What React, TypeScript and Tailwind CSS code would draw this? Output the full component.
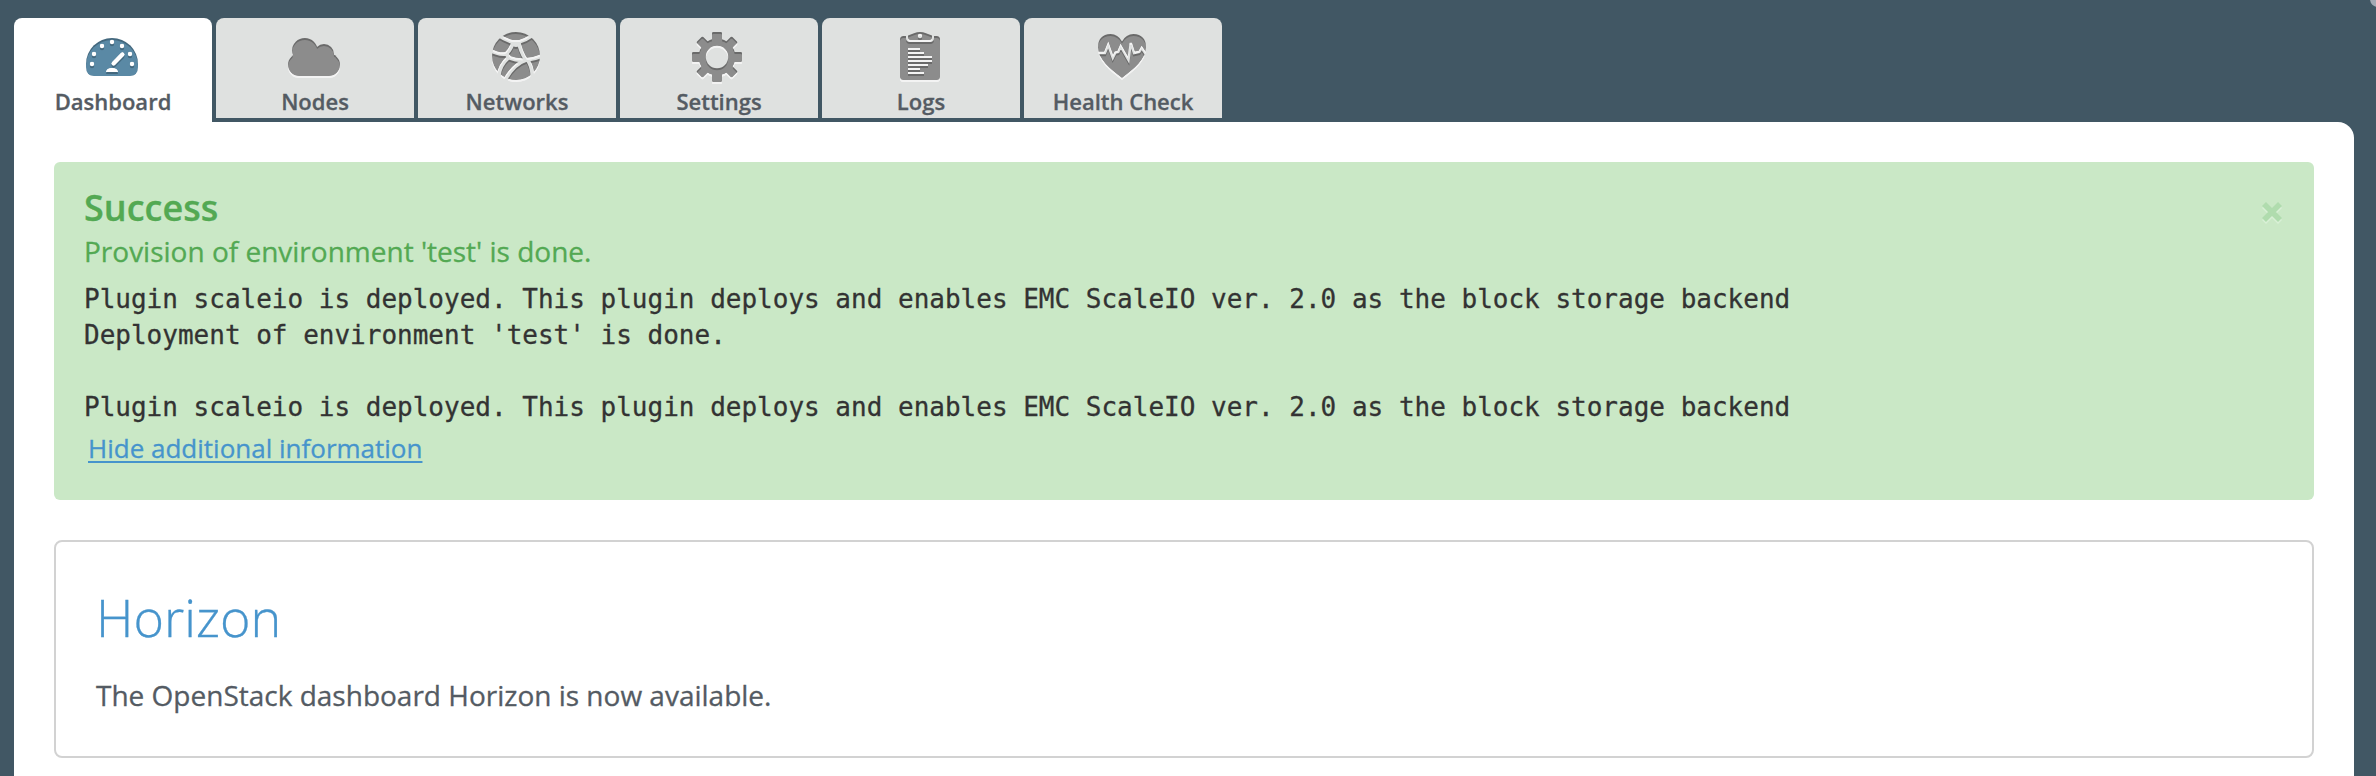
import React, { useId } from "react";

type Tone = { main: string; dark: string; light: string };
const GRAY: Tone = { main: "#8c8c8c", dark: "#6a6a6a", light: "#f3f3f3" };
const BLUE: Tone = { main: "#5a89a5", dark: "#43687e", light: "#ffffff" };

/* Embossed icon: dark inner edge on top, light edge below. White in the mask is solid, black is cut out. */
function Embossed({ tone, children }: { tone: Tone; children: React.ReactNode }) {
  const id = useId().replace(/[^a-zA-Z0-9]/g, "");
  const a = `m${id}a`;
  const b = `m${id}b`;
  return (
    <svg width="60" height="60" viewBox="0 0 60 60" className="relative -left-px block shrink-0">
      <mask id={a} maskUnits="userSpaceOnUse" x="0" y="0" width="60" height="60">
        {children}
      </mask>
      <mask id={b} maskUnits="userSpaceOnUse" x="0" y="0" width="60" height="60">
        <g transform="translate(0 2)">{children}</g>
      </mask>
      <rect width="60" height="60" fill={tone.light} mask={`url(#${b})`} />
      <rect width="60" height="60" fill={tone.dark} mask={`url(#${a})`} />
      <g mask={`url(#${a})`}>
        <rect width="60" height="60" fill={tone.main} mask={`url(#${b})`} />
      </g>
      <g mask={`url(#${b})`}>
        <Cutout mask={a} light={tone.light} id={`${id}c`} />
      </g>
    </svg>
  );
}

/* Light edge wherever the lowered shape shows through a hole of the upper one. */
function Cutout({ mask, light, id }: { mask: string; light: string; id: string }) {
  return (
    <>
      <mask id={id} maskUnits="userSpaceOnUse" x="0" y="0" width="60" height="60">
        <rect width="60" height="60" fill="#fff" />
        <rect width="60" height="60" fill="#000" mask={`url(#${mask})`} />
      </mask>
      <rect width="60" height="60" fill={light} mask={`url(#${id})`} />
    </>
  );
}

const dots = [[10, 38], [12, 28], [20, 20], [30, 16], [40, 20], [48, 28], [50, 38]];

const Gauge = (
  <>
    <path fill="#fff" d="M4 41V38A26 26 0 0 1 56 38V41Q56 50 48 50H12Q4 50 4 41Z" />
    {dots.map(([x, y]) => (
      <circle key={`${x}-${y}`} cx={x} cy={y} r="2.2" fill="#000" />
    ))}
    <path d="M31.6 37.4L40.4 28.6" stroke="#000" strokeWidth="4.2" strokeLinecap="round" />
    <path fill="#000" d="M24 46Q24.5 42 30 42T36 46Z" />
  </>
);

const Cloud = (
  <g fill="#fff">
    <circle cx="20.8" cy="24.8" r="12.8" />
    <circle cx="40" cy="28" r="10" />
    <circle cx="15.2" cy="38.8" r="11.2" />
    <circle cx="44.8" cy="38.8" r="11.2" />
    <rect x="15" y="26" width="30" height="24" />
  </g>
);

const Network = (
  <>
    <circle cx="30" cy="30" r="24" fill="#fff" />
    <g fill="none" stroke="#000" strokeWidth="3.8">
      <path d="M12 9Q19 14 27 16H33Q40 14 47 9" />
      <path d="M27.500 15Q25 24 20 28" />
      <path d="M4 24Q12 29 20 28" />
      <path d="M32.500 15Q34 25 40 34" />
      <path d="M20 28L24 32Q31 35 40 34Q49 33 56 30" />
      <path d="M22 32Q14 39 12.500 50" />
      <path d="M40 34Q28 38 19 54" />
      <path d="M41 33Q46 40 46.500 50" />
    </g>
    <circle cx="30" cy="17.500" r="3.500" fill="#000" />
  </>
);

const Gear = (
  <>
    <g fill="#fff">
      <circle cx="29" cy="31" r="18.4" />
      {[0, 90, 180, 270].map((r) => (
        <rect key={r} x="24" y="6" width="10" height="12" rx="1.2" transform={`rotate(${r} 29 31)`} />
      ))}
      {[45, 135, 225, 315].map((r) => (
        <rect key={r} x="24.6" y="6" width="8.8" height="12" rx="1.2" transform={`rotate(${r} 29 31)`} />
      ))}
    </g>
    <circle cx="29" cy="31" r="11.2" fill="#000" />
  </>
);

const Clipboard = (
  <>
    <rect x="10" y="10" width="40" height="44" rx="3.5" fill="#fff" />
    <path fill="#000" d="M16 9H44V12Q44 16 40 16H20Q16 16 16 12Z" />
    <path fill="#fff" d="M18 9.5L24 7.2Q30 4.8 36 7.2L42 9.5V11.5Q42 14 39.5 14H20.5Q18 14 18 11.5Z" />
    <circle cx="30" cy="10" r="2.2" fill="#000" />
    <path
      fill="#000"
      d="M18 22h12v2h-12zM18 26h16v2h-16zM18 30h24v2h-24zM18 34h24v2h-24zM18 38h20v2h-20zM18 42h12v2h-12zM18 46h16v2h-16z"
    />
  </>
);

const Heart = (
  <>
    <path
      fill="#fff"
      d="M30 15.5Q26 8 18.5 8Q6 8.500 6 21.500C6 33 18 43 30 52C42 43 54 33 54 21.500Q54 8.500 41.500 8Q34 8 30 15.500Z"
    />
    <path
      fill="none"
      stroke="#000"
      strokeWidth="2.4"
      d="M4 27H13L16.200 19L20.800 32L23.500 26.500L26.300 26L28.700 20.500L36.500 34L38.800 17L42 27L47.300 26L49.700 22L53 27H56"
    />
  </>
);

const tabs = [
  { label: "Dashboard", icon: Gauge },
  { label: "Nodes", icon: Cloud },
  { label: "Networks", icon: Network },
  { label: "Settings", icon: Gear },
  { label: "Logs", icon: Clipboard },
  { label: "Health Check", icon: Heart },
];

const log = `Plugin scaleio is deployed. This plugin deploys and enables EMC ScaleIO ver. 2.0 as the block storage backend
Deployment of environment 'test' is done.

Plugin scaleio is deployed. This plugin deploys and enables EMC ScaleIO ver. 2.0 as the block storage backend`;

export default function App() {
  return (
    <div className="relative flex h-[776px] w-[2376px] flex-col overflow-hidden bg-[#415764] pr-[22px] pl-[14px] pt-[18px] font-['Open_Sans',sans-serif] text-[#545b63] [-webkit-text-stroke:0.3px]">
      <span className="absolute -top-[9px] left-[2370px] size-4 rounded-full bg-[#a3a9b4]" />
      <nav className="flex h-[104px] shrink-0 gap-1">
        {tabs.map((t, i) => (
          <a
            key={t.label}
            className={
              i === 0
                ? "flex h-[104px] w-[198px] flex-col items-center rounded-t-lg bg-white pt-2"
                : "flex h-[100px] w-[198px] flex-col items-center rounded-t-lg bg-[#dfe1e0] pt-2"
            }
          >
            <Embossed tone={i === 0 ? BLUE : GRAY}>{t.icon}</Embossed>
            <span className="text-[22px] leading-[30px] font-semibold whitespace-nowrap">{t.label}</span>
          </a>
        ))}
      </nav>
      <main className="flex grow flex-col gap-10 rounded-tr-2xl bg-white px-10 pt-10">
        <section className="flex h-[338px] shrink-0 justify-between rounded-md bg-[#cae8c6] pt-[21px] pr-[32px] pl-[30px]">
          <div className="flex flex-col items-start">
            <h4 className="text-[36px] leading-[50px] font-semibold text-[#53a953]">Success</h4>
            <p className="text-[28px] leading-[36px] text-[#53a953]">Provision of environment 'test' is done.</p>
            <pre className="mt-3 font-['DejaVu_Sans_Mono',monospace] text-[26px] leading-[36px] text-[#333333]">{log}</pre>
            <a className="mt-[5px] ml-1 text-[26px] leading-[36px] text-[#4694cc] underline decoration-2 underline-offset-[3px]">
              Hide additional information
            </a>
          </div>
          <svg width="20" height="22" viewBox="0 0 20 22" className="mt-[19px]" fill="none" strokeWidth="5.6">
            <path d="M2 4L18 20M18 4L2 20" stroke="#d9f0d6" />
            <path d="M2 2L18 18M18 2L2 18" stroke="#b0dcae" />
          </svg>
        </section>
        <section className="flex h-[218px] shrink-0 flex-col rounded-lg border-2 border-[#d2d2d2] pt-[39px] pl-[40px]">
          <h2 className="text-[52px] leading-[72px] font-light text-[#4694cc]">Horizon</h2>
          <p className="mt-[22px] text-[28px] leading-[40px]">The OpenStack dashboard Horizon is now available.</p>
        </section>
      </main>
    </div>
  );
}
